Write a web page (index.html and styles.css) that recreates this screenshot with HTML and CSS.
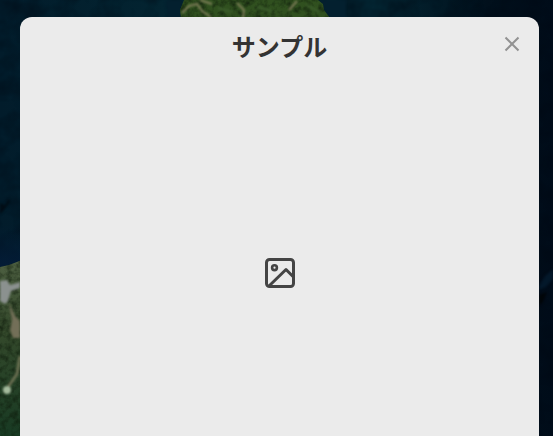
FILE: index.html
```html
<!DOCTYPE html>
<html lang="ja">
<head>
<meta charset="utf-8">
<meta name="viewport" content="width=device-width, initial-scale=1">
<title>サンプル</title>
<link rel="stylesheet" href="styles.css">
</head>
<body>
<svg class="map" viewBox="0 0 553 436" preserveAspectRatio="xMidYMid slice" aria-hidden="true">
  <defs>
    <linearGradient id="sea">
      <stop offset="0" stop-color="#021c2b"/>
      <stop offset=".3" stop-color="#032431"/>
      <stop offset=".7" stop-color="#032431"/>
      <stop offset=".88" stop-color="#01101c"/>
      <stop offset="1" stop-color="#000c19"/>
    </linearGradient>
    <linearGradient id="bay" x2="0" y2="1">
      <stop offset="0" stop-color="#031b36" stop-opacity="0"/>
      <stop offset="1" stop-color="#031b36"/>
    </linearGradient>
    <linearGradient id="coast" x2="0" y2="1">
      <stop offset="0" stop-color="#4e6042"/>
      <stop offset=".4" stop-color="#34492b"/>
      <stop offset="1" stop-color="#183a23"/>
    </linearGradient>
    <filter id="grain" x="0" y="0" width="1" height="1" color-interpolation-filters="sRGB">
      <feTurbulence type="fractalNoise" baseFrequency=".16" numOctaves="3" seed="4"/>
      <feColorMatrix values="0 0 0 0 .05  0 0 0 0 .1  0 0 0 0 .04  1.4 0 0 0 -.55"/>
      <feComposite in2="SourceGraphic" operator="in" result="dark"/>
      <feMerge><feMergeNode in="SourceGraphic"/><feMergeNode in="dark"/></feMerge>
    </filter>
    <filter id="swell" x="0" y="0" width="1" height="1" color-interpolation-filters="sRGB">
      <feTurbulence type="fractalNoise" baseFrequency=".05" numOctaves="3" seed="8"/>
      <feColorMatrix values="0 0 0 0 0  0 0 0 0 .03  0 0 0 0 .07  1.6 0 0 0 -.6"/>
    </filter>
    <filter id="soft" x="-50%" y="-50%" width="200%" height="200%" color-interpolation-filters="sRGB"><feGaussianBlur stdDeviation="1"/></filter>
  </defs>
  <rect width="553" height="436" fill="url(#sea)"/>
  <rect width="553" height="436" filter="url(#swell)" opacity=".6"/>
  <path d="M0 225h22v36L0 267z" fill="url(#bay)"/>
  <g filter="url(#soft)">
    <path d="M0 203l5 2 4-6 1 3-5 7-5 5z" fill="#010d16"/>
    <path d="M539 286l6-10 8-7v10l-7 8-7 3z" fill="#03182a"/>
    <path d="M539 295l8-3-4 10-4 3z" fill="#000509"/>
    <path d="M165 0h17v18h-14zM318 0h28v18h-17z" fill="#03202f"/>
  </g>
  <path d="M184 0h134l5 4 1 6 6 8H181l-1-8z" fill="#30501f" filter="url(#grain)"/>
  <g filter="url(#soft)" fill="none">
    <path d="M182 13l7-7 8-2 5 7 9 6M237 3l7 7-1 8M200 0l12 4M297 1l-8 9" stroke="#7d7d58" stroke-width="2"/>
    <path d="M218 8l14 4M257 7l15 4M306 5l14 7" stroke="#395a29" stroke-width="3"/>
  </g>
  <path d="M0 267l9-2 13-5v176H0z" fill="url(#coast)" filter="url(#grain)"/>
  <g filter="url(#soft)">
    <path d="M0 281l7-1 3 5 10-3v6l-9 3-3 10-3 3-5-3z" fill="#8b918f"/>
    <path d="M9 303l6 13 5 5v17h-7l-3-8 2-10z" fill="#736f58"/>
    <path d="M20 356l-3 18-9 13" fill="none" stroke="#6b7052" stroke-width="3"/>
    <circle cx="7" cy="390" r="4" fill="#a5bb9d"/>
  </g>
</svg>
<section class="panel" role="dialog" aria-labelledby="panel-title">
  <header class="panel-header">
    <h1 class="panel-title" id="panel-title">サンプル</h1>
    <button class="close" type="button" aria-label="閉じる">
      <svg width="16" height="16" viewBox="0 0 16 16" fill="none" stroke="currentColor" stroke-width="2" aria-hidden="true">
        <path d="M1.5 1.5l13 13M14.5 1.5l-13 13"/>
      </svg>
    </button>
  </header>
  <div class="media">
    <svg width="31" height="31" viewBox="0 0 31 31" fill="none" stroke="currentColor" stroke-width="3" stroke-linejoin="round" aria-hidden="true">
      <rect x="2.5" y="2.5" width="27" height="27" rx="3"/>
      <circle cx="10.5" cy="10.7" r="2.4" stroke-width="2.6"/>
      <path d="M5 29L22 12.5l7.5 7.5"/>
    </svg>
  </div>
</section>
</body>
</html>
```
FILE: styles.css
```css
* {
  box-sizing: border-box;
}

body {
  display: flex;
  flex-direction: column;
  min-height: 100vh;
  margin: 0;
  padding: 17px 14px 0 20px;
  background: #021c2b;
  color: #333;
  font-family: "Noto Sans", "Noto Sans CJK JP", sans-serif;
}

.map {
  position: fixed;
  inset: 0;
  z-index: -1;
  width: 100%;
  height: 100%;
}

.panel {
  flex: 1;
  display: flex;
  flex-direction: column;
  border-radius: 12px 12px 0 0;
  background: #ebebeb;
}

.panel-header {
  display: grid;
  grid-template-columns: 30px 1fr 30px;
  align-items: start;
  padding: 12px;
}

.panel-title {
  grid-column: 2;
  margin: 0;
  font-size: 24px;
  font-weight: 700;
  line-height: 36px;
  text-align: center;
}

.close {
  display: flex;
  align-items: center;
  justify-content: center;
  width: 30px;
  height: 30px;
  padding: 0;
  border: 0;
  background: none;
  color: #929292;
  cursor: pointer;
}

.media {
  flex: 1;
  display: flex;
  align-items: flex-start;
  justify-content: center;
  padding-top: 180px;
  color: #444;
}
```
